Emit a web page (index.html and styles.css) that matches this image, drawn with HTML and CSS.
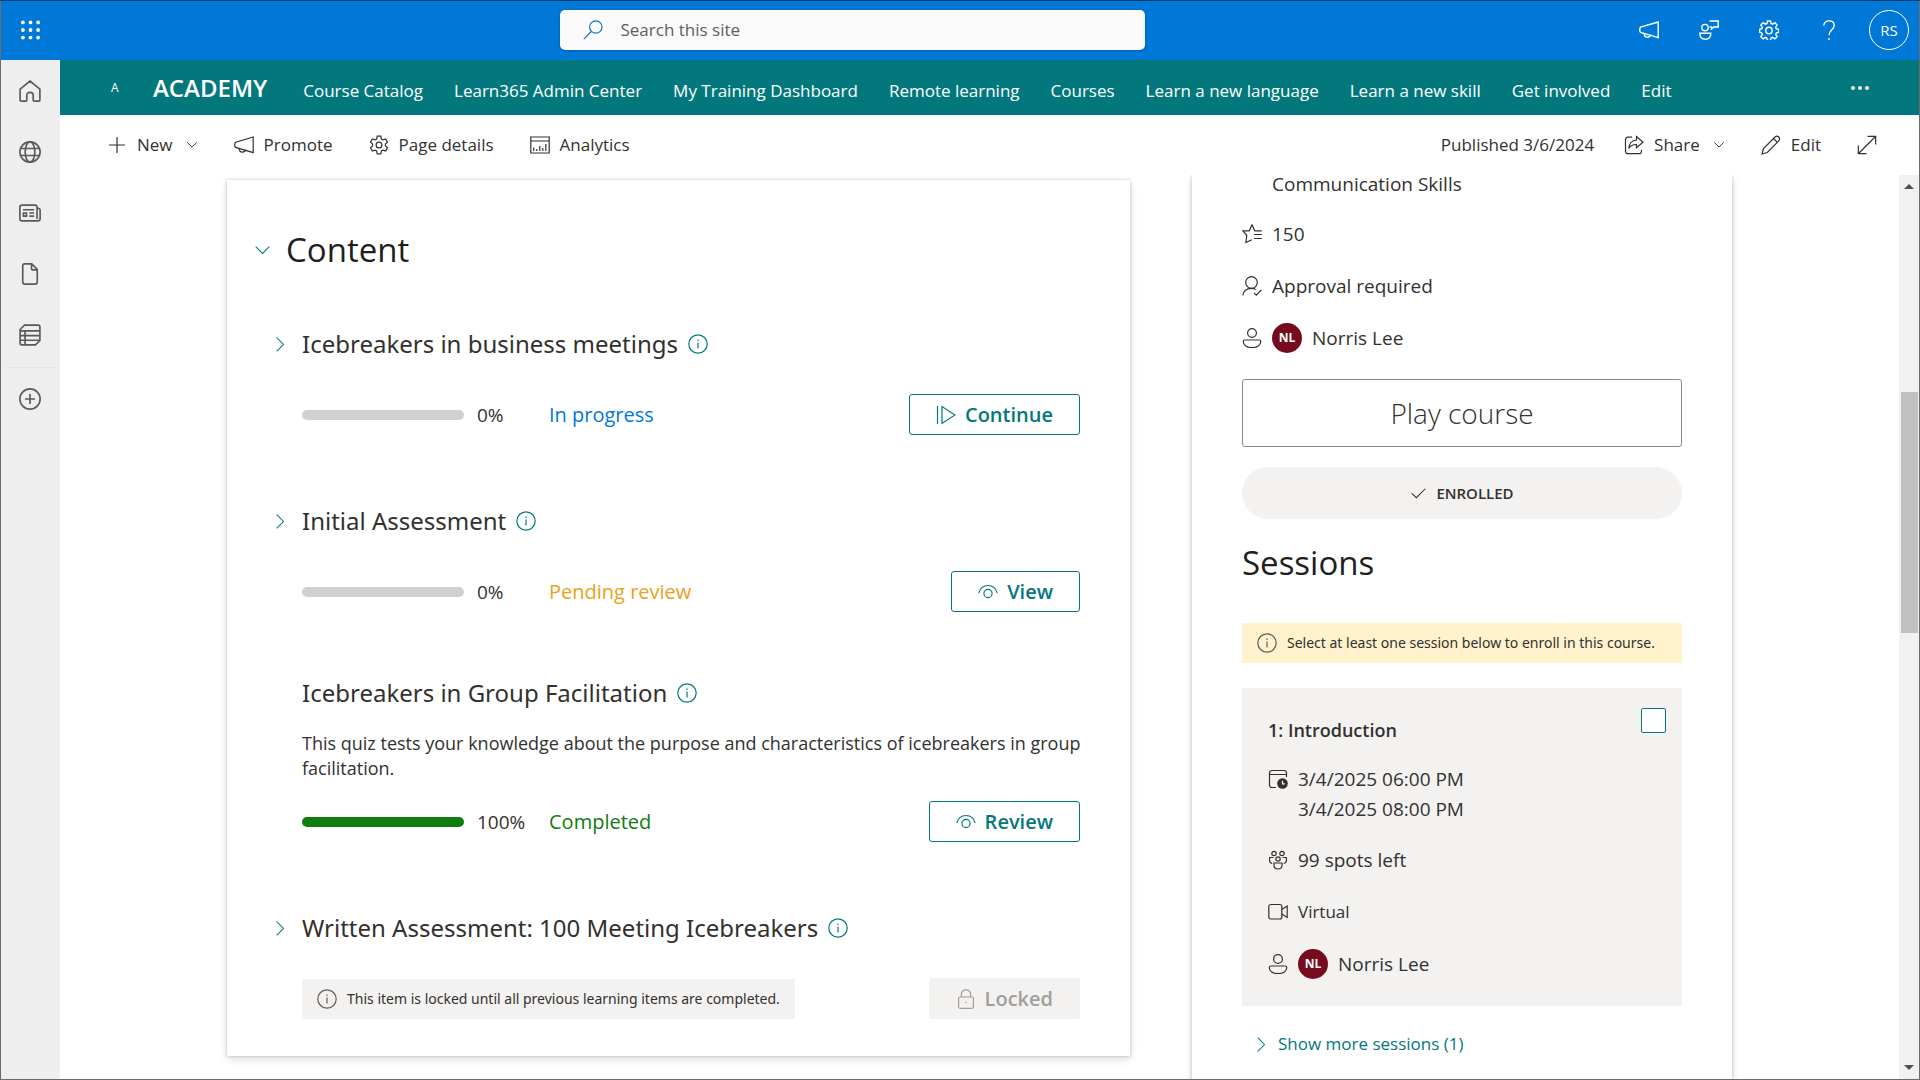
FILE: index.html
```html
<!DOCTYPE html>
<html lang="en">
  <head>
    <meta charset="UTF-8">
    <meta name="viewport" content="width=device-width, initial-scale=1">
    <title>Academy</title>
    <link rel="stylesheet" href="styles.css">
  </head>
  <body>

    <!-- icon sprite, 20x20 grid -->
    <svg class="sprite" aria-hidden="true">
      <symbol id="i-waffle" viewBox="0 0 20 20"><g fill="currentColor"><circle cx="2" cy="2" r="2"/><circle cx="10" cy="2" r="2"/><circle cx="18" cy="2" r="2"/><circle cx="2" cy="10" r="2"/><circle cx="10" cy="10" r="2"/><circle cx="18" cy="10" r="2"/><circle cx="2" cy="18" r="2"/><circle cx="10" cy="18" r="2"/><circle cx="18" cy="18" r="2"/></g></symbol>
      <symbol id="i-search" viewBox="0 0 20 20"><circle cx="12.8" cy="7" r="6.2"/><path d="M8.3 11.5L.8 19.2"/></symbol>
      <symbol id="i-megaphone" viewBox="0 0 20 20"><path d="M19.2 2v15.6L1.6 12.4.8 11.2V8.4L1.6 7.2z"/><path d="M5.2 13.6c0 2 1.3 3.6 3.2 3.6s3-1 3.4-2.6"/></symbol>
      <symbol id="i-feedback" viewBox="0 0 20 20"><path d="M10.5 1h8.7v6h-4.4l-2.3 2V7h-2"/><circle cx="6" cy="7.6" r="3.2"/><path d="M.8 13.2h11c0 4-2 6-5.5 6s-5.5-2-5.5-6z"/></symbol>
      <symbol id="i-gear" viewBox="0 0 20 20"><path d="M8.4 1h3.2l.5 2.5 1.6.7 2.2-1.5 2.3 2.3-1.5 2.2.7 1.6 2.4.5v3l-2.4.5-.7 1.6 1.5 2.2-2.3 2.3-2.2-1.5-1.6.7-.5 2.4H8.4l-.5-2.4-1.6-.7-2.2 1.5L1.8 16.6l1.5-2.2-.7-1.6-2-.5v-3l2-.5.7-1.6L1.8 5l2.3-2.3 2.2 1.5 1.6-.7z"/><circle cx="10" cy="10.5" r="3.2"/></symbol>
      <symbol id="i-settings" viewBox="0 0 20 20"><path d="M8.200 1.200h3.600l.6 2.800 1.600.9 2.700-.9 1.800 3.100-2.100 1.900v2l2.100 1.900-1.800 3.100-2.700-.9-1.600.9-.6 2.800H8.200L7.600 16 6 15.100l-2.700.9-1.800-3.100L3.600 11V9L1.500 7.100 3.300 4l2.700.9L7.600 4z"/><circle cx="10" cy="10" r="2.900"/></symbol>
      <symbol id="i-help" viewBox="0 0 20 20"><path d="M4.800 5.600C4.800 2.800 7 .9 10 .9s5.200 1.800 5.200 4.600c0 4-5.200 4.800-5.200 9.700"/><path d="M10 18v2"/></symbol>
      <symbol id="i-home" viewBox="0 0 20 20"><path d="M1 8.200L10 .9l9 7.300v10c0 .6-.4 1-1 1h-4.200c-.6 0-.9-.4-.9-1v-4.400c0-1.600-1.200-2.500-2.900-2.500s-2.900.9-2.900 2.500v4.400c0 .6-.3 1-.9 1H2c-.6 0-1-.4-1-1z"/></symbol>
      <symbol id="i-globe" viewBox="0 0 20 20"><circle cx="10" cy="10" r="9.200"/><ellipse cx="10" cy="10" rx="4.400" ry="9.200"/><path d="M1.400 6.800h17.200M1.400 13.200h17.200"/></symbol>
      <symbol id="i-news" viewBox="0 0 20 20"><path d="M16.400 15.500V4.800c0-1.200-.8-2-2-2H2.800c-1.200 0-2 .8-2 2v10.400c0 1.200.8 2 2 2h14.400c1.200 0 2-.8 2-2V7.400c0-1-.9-1.900-2.600-1.900M3.600 7h10.200M9.400 10h4.400M9.400 12.800h4.400M4 10h2.800v2.800H4z"/></symbol>
      <symbol id="i-file" viewBox="0 0 20 20"><path d="M5.200.8h6.400l5 5v11.400c0 1.200-.8 2-2 2H5.400c-1.200 0-2-.8-2-2V2.800c0-1.200.6-2 1.800-2z"/><path d="M11.400 1v4.200c0 .6.4 1 1 1h4"/></symbol>
      <symbol id="i-list" viewBox="0 0 20 20"><path d="M5 1h12.200c1 0 1.800.8 1.800 1.800V15l-4 4H2.800c-1 0-1.800-.8-1.800-1.800V5z"/><path d="M1.200 6.200H19M1 10.500h18M1 14.800h17.800M5.500 6.200V19"/></symbol>
      <symbol id="i-add-circle" viewBox="0 0 20 20"><circle cx="10" cy="10" r="9.200"/><path d="M10 5.500v9M5.500 10h9"/></symbol>
      <symbol id="i-plus" viewBox="0 0 20 20"><path d="M10 2v16M2 10h16"/></symbol>
      <symbol id="i-down" viewBox="0 0 20 20"><path d="M2 5.500l8 8 8-8"/></symbol>
      <symbol id="i-right" viewBox="0 0 20 20"><path d="M5.500 2l8 8-8 8"/></symbol>
      <symbol id="i-chart" viewBox="0 0 20 20"><path d="M.8 2h18.400v16H.8zM.8 6h18.400M3.800 16v-3.500M6.800 16v-2M9.800 16v-5M12.800 16v-3M15.800 16V9"/></symbol>
      <symbol id="i-share" viewBox="0 0 20 20"><path d="M8 2.200H4C2.500 2.200 1.500 3.200 1.500 4.700v11.500c0 1.500 1 2.500 2.500 2.500h11c1.500 0 2.500-1 2.500-2.500v-1.500"/><path d="M12.500 1.500l6.500 5.700-6.500 5.600V9.500c-3.500 0-6 1-7.700 4 .3-4.500 2.900-8 7.700-8.500z"/></symbol>
      <symbol id="i-pencil" viewBox="0 0 20 20"><path d="M1 19l1.500-5.500L14 2c1-1 2.800-1 3.800 0s1 2.800 0 3.800L6.300 17.500z"/><path d="M12.500 3.500l3.900 3.900"/></symbol>
      <symbol id="i-expand" viewBox="0 0 20 20"><path d="M1.500 18.500l17-17M10.500 1.300h8.200v8.200M1.300 10.500v8.200h8.200"/></symbol>
      <symbol id="i-info" viewBox="0 0 20 20"><circle cx="10" cy="10" r="9.200"/><path d="M10 8.500V14.500M10 5.500v1.500"/></symbol>
      <symbol id="i-play" viewBox="0 0 20 20"><path d="M1.500 1v18M6 1.500v17L19 10z"/></symbol>
      <symbol id="i-eye" viewBox="0 0 20 20"><path d="M.8 11C2 6.500 5.500 3.500 10 3.500s8 3 9.200 7.500"/><circle cx="10" cy="11.500" r="4.100"/></symbol>
      <symbol id="i-lock" viewBox="0 0 20 20"><rect x="2.600" y="8" width="14.800" height="11.300" rx="1.500"/><path d="M5.400 8V5.200C5.400 2.600 7.400.8 10 .8s4.600 1.800 4.600 4.400V8M10 12.700v1.600"/></symbol>
      <symbol id="i-star" viewBox="0 0 20 20"><path d="M19.800 6.800h-7L10 .8 7.200 6.800H.8l4 4.500L3.900 18.500l6-2.700M12 10.500h7.800M12 14.500h7.800"/></symbol>
      <symbol id="i-approve" viewBox="0 0 20 20"><circle cx="9.500" cy="6.500" r="5.800"/><path d="M.8 19.500c.5-4.600 4-7.200 8.700-7.200 1.600 0 3 .4 4.200 1.200M12 16.800l2.300 2.300L19.300 14"/></symbol>
      <symbol id="i-person" viewBox="0 0 20 20"><circle cx="10" cy="5" r="4.400"/><path d="M3 12h14c1 0 1.800.7 1.800 1.600 0 3.700-3.800 6-8.800 6s-8.800-2.300-8.800-6C1.200 12.700 2 12 3 12z"/></symbol>
      <symbol id="i-check" viewBox="0 0 20 20"><path d="M2 10.500l5.500 5L18 5"/></symbol>
      <symbol id="i-calendar" viewBox="0 0 20 20"><path d="M8 18.500H4c-1.500 0-2.500-1-2.500-2.500V4c0-1.500 1-2.500 2.500-2.500h12c1.500 0 2.500 1 2.500 2.500v4M1.500 5.500h17"/><circle cx="14.500" cy="14.500" r="5.300" fill="currentColor" stroke="none"/><path d="M14.500 11.800v3h2.300" stroke="#fff"/></symbol>
      <symbol id="i-people" viewBox="0 0 20 20"><circle cx="6" cy="3.500" r="2.200"/><circle cx="14" cy="3.500" r="2.200"/><circle cx="10" cy="9" r="2.200"/><path d="M6 13h8v2.500c0 2-1.600 3.500-4 3.500s-4-1.500-4-3.500zM5.500 7.500H1.800c0 0-1.600 5.500 2.400 6M14.500 7.500h3.700c0 0 1.600 5.500-2.400 6"/></symbol>
      <symbol id="i-video" viewBox="0 0 20 20"><rect x=".8" y="2.500" width="13" height="14.500" rx="2"/><path d="M13.800 7.500l5.400-3.500v11.500l-5.400-3.500"/></symbol>
    </svg>

    <header class="suite-bar">
      <button class="suite-btn" aria-label="App launcher"><svg class="icon"><use href="#i-waffle"/></svg></button>
      <form class="search" role="search">
        <label class="search-box">
          <svg class="icon"><use href="#i-search"/></svg>
          <input type="search" placeholder="Search this site" aria-label="Search this site">
        </label>
      </form>
      <button class="suite-btn" aria-label="Announcements"><svg class="icon"><use href="#i-megaphone"/></svg></button>
      <button class="suite-btn" aria-label="Feedback"><svg class="icon"><use href="#i-feedback"/></svg></button>
      <button class="suite-btn" aria-label="Settings"><svg class="icon"><use href="#i-gear"/></svg></button>
      <button class="suite-btn" aria-label="Help"><svg class="icon"><use href="#i-help"/></svg></button>
      <button class="suite-btn" aria-label="Account"><span class="me">RS</span></button>
    </header>

    <div class="shell">

      <nav class="app-bar" aria-label="App bar">
        <a href="#" aria-label="Home"><svg class="icon"><use href="#i-home"/></svg></a>
        <a href="#" aria-label="Sites"><svg class="icon"><use href="#i-globe"/></svg></a>
        <a href="#" aria-label="News"><svg class="icon"><use href="#i-news"/></svg></a>
        <a href="#" aria-label="Files"><svg class="icon"><use href="#i-file"/></svg></a>
        <a href="#" aria-label="Lists"><svg class="icon"><use href="#i-list"/></svg></a>
        <hr>
        <a href="#" aria-label="Create"><svg class="icon"><use href="#i-add-circle"/></svg></a>
      </nav>

      <div class="site">

        <div class="site-header">
          <span class="site-logo">A</span>
          <a class="site-title" href="#">ACADEMY</a>
          <nav class="site-nav">
            <a href="#">Course Catalog</a>
            <a href="#">Learn365 Admin Center</a>
            <a href="#">My Training Dashboard</a>
            <a href="#">Remote learning</a>
            <a href="#">Courses</a>
            <a href="#">Learn a new language</a>
            <a href="#">Learn a new skill</a>
            <a href="#">Get involved</a>
            <a href="#">Edit</a>
          </nav>
          <button class="more" aria-label="More"><i></i><i></i><i></i></button>
        </div>

        <div class="command-bar">
          <button class="cmd"><svg class="icon"><use href="#i-plus"/></svg>New<svg class="icon icon-caret"><use href="#i-down"/></svg></button>
          <button class="cmd"><svg class="icon"><use href="#i-megaphone"/></svg>Promote</button>
          <button class="cmd"><svg class="icon"><use href="#i-settings"/></svg>Page details</button>
          <button class="cmd"><svg class="icon"><use href="#i-chart"/></svg>Analytics</button>
          <span class="published">Published 3/6/2024</span>
          <button class="cmd"><svg class="icon"><use href="#i-share"/></svg>Share<svg class="icon icon-caret"><use href="#i-down"/></svg></button>
          <button class="cmd"><svg class="icon"><use href="#i-pencil"/></svg>Edit</button>
          <button class="cmd" aria-label="Expand"><svg class="icon"><use href="#i-expand"/></svg></button>
        </div>

        <div class="scroll-area">
          <main class="page">

            <section class="card content">
              <h2 class="content-title"><button class="toggle" aria-label="Collapse content"><svg class="icon icon-small"><use href="#i-down"/></svg></button>Content</h2>

              <article class="item">
                <h3 class="item-title item-title-toggle"><button class="toggle" aria-label="Expand"><svg class="icon icon-small"><use href="#i-right"/></svg></button>Icebreakers in business meetings <svg class="icon"><use href="#i-info"/></svg></h3>
                <div class="item-row">
                  <progress value="0" max="100" aria-label="Progress"></progress>
                  <span class="percent">0%</span>
                  <span class="status status-progress">In progress</span>
                  <button class="btn"><svg class="icon"><use href="#i-play"/></svg>Continue</button>
                </div>
              </article>

              <article class="item">
                <h3 class="item-title item-title-toggle"><button class="toggle" aria-label="Expand"><svg class="icon icon-small"><use href="#i-right"/></svg></button>Initial Assessment <svg class="icon"><use href="#i-info"/></svg></h3>
                <div class="item-row">
                  <progress value="0" max="100" aria-label="Progress"></progress>
                  <span class="percent">0%</span>
                  <span class="status status-pending">Pending review</span>
                  <button class="btn"><svg class="icon"><use href="#i-eye"/></svg>View</button>
                </div>
              </article>

              <article class="item">
                <h3 class="item-title">Icebreakers in Group Facilitation <svg class="icon"><use href="#i-info"/></svg></h3>
                <p class="item-text">This quiz tests your knowledge about the purpose and characteristics of icebreakers in group facilitation.</p>
                <div class="item-row item-row-tight">
                  <progress value="100" max="100" aria-label="Progress"></progress>
                  <span class="percent">100%</span>
                  <span class="status status-done">Completed</span>
                  <button class="btn"><svg class="icon"><use href="#i-eye"/></svg>Review</button>
                </div>
              </article>

              <article class="item">
                <h3 class="item-title item-title-toggle"><button class="toggle" aria-label="Expand"><svg class="icon icon-small"><use href="#i-right"/></svg></button>Written Assessment: 100 Meeting Icebreakers <svg class="icon"><use href="#i-info"/></svg></h3>
                <div class="item-row">
                  <div class="notice"><svg class="icon"><use href="#i-info"/></svg>This item is locked until all previous learning items are completed.</div>
                  <button class="btn" disabled><svg class="icon"><use href="#i-lock"/></svg>Locked</button>
                </div>
              </article>
            </section>

            <aside class="card details">
              <ul class="facts">
                <li class="fact-indent">Communication Skills</li>
                <li><svg class="icon"><use href="#i-star"/></svg>150</li>
                <li><svg class="icon"><use href="#i-approve"/></svg>Approval required</li>
                <li><svg class="icon"><use href="#i-person"/></svg><span class="avatar">NL</span>Norris Lee</li>
              </ul>
              <button class="btn-play">Play course</button>
              <div class="enrolled"><svg class="icon"><use href="#i-check"/></svg>ENROLLED</div>

              <h2 class="sessions-title">Sessions</h2>
              <div class="notice notice-warn"><svg class="icon"><use href="#i-info"/></svg>Select at least one session below to enroll in this course.</div>

              <div class="session">
                <div class="session-head">
                  <label for="session-1">1: Introduction</label>
                  <input type="checkbox" id="session-1">
                </div>
                <ul class="facts facts-session">
                  <li class="fact-dates"><svg class="icon"><use href="#i-calendar"/></svg><span>3/4/2025 06:00 PM<br>3/4/2025 08:00 PM</span></li>
                  <li><svg class="icon"><use href="#i-people"/></svg>99 spots left</li>
                  <li class="fact-place"><svg class="icon"><use href="#i-video"/></svg>Virtual</li>
                  <li><svg class="icon"><use href="#i-person"/></svg><span class="avatar">NL</span>Norris Lee</li>
                </ul>
              </div>

              <a class="show-more" href="#"><svg class="icon icon-small"><use href="#i-right"/></svg>Show more sessions (1)</a>
            </aside>

          </main>
          <div class="scrollbar" aria-hidden="true">
            <span class="arrow arrow-up"></span>
            <span class="thumb"></span>
            <span class="arrow arrow-down"></span>
          </div>
        </div>

      </div>
    </div>

  </body>
</html>
```

FILE: styles.css
```css
* { box-sizing: border-box }
body {
  display: flex;
  flex-direction: column;
  height: 100vh;
  margin: 0;
  overflow: hidden;
  border: 1px solid #6b6b6b;
  border-top-color: #003c6b;
  background: #fff;
  color: #323130;
  font: 17px/24px "Open Sans", "Noto Sans", sans-serif;
}
button, input { font: inherit; color: inherit }
button { padding: 0; border: 0; background: none }
a { color: inherit; text-decoration: none }
h2, h3, p, ul { margin: 0; padding: 0; font-weight: 400; list-style: none }

.sprite { display: none }
.icon { flex: none; width: 20px; height: 20px; fill: none; stroke: currentColor; stroke-width: 1.2 }
.icon-small { width: 17px; height: 17px }
.icon-caret { width: 12px; height: 12px; margin-left: 3px; stroke-width: 1.6 }

/* suite bar */

.suite-bar { display: flex; flex: none; height: 59px; padding-bottom: 1px; background: #0078d7; color: #fff }
.suite-btn { display: flex; align-items: center; justify-content: center; width: 60px }
.suite-btn:first-child { width: 58px; margin-right: 26px }
.suite-btn .icon { stroke-width: 1.4 }
.suite-btn:first-child .icon { width: 19px; stroke: none }
.me { width: 40px; border: 1px solid #fff; border-radius: 50%; font-size: 15px; line-height: 38px }
.search { display: flex; flex: 1; align-items: center; justify-content: center }
.search-box { display: flex; align-items: center; gap: 16px; width: 585px; height: 40px; padding: 0 23px; border-radius: 5px; background: #fafafa; color: #1a73c7; box-shadow: 0 1px 3px rgba(0,0,0,.25) }
.search-box input { flex: 1; border: 0; outline: 0; background: none; color: #605e5c }
.search-box input::placeholder { color: #605e5c }

/* left app bar */

.shell { display: flex; flex: 1; min-height: 0 }
.app-bar { flex: none; width: 59px; padding-right: 2px; background: #eee; color: #5a5a5a }
.app-bar a { display: flex; align-items: center; justify-content: center; height: 61px }
.app-bar .icon { width: 22px; height: 22px; stroke-width: 1.5 }
.app-bar hr { margin: 2px 3px 0 5px; border: 0; border-top: 1px solid #e2e4e6 }

/* site header */

.site { display: flex; flex: 1; flex-direction: column; min-width: 0 }
.site-header { display: flex; flex: none; align-items: center; height: 55px; padding: 0 50px 0 51px; background: #03787c; color: #fff }
.site-logo { width: 10px; font-size: 12px }
.site-title { margin: 0 36px 0 32px; font-size: 24px; font-weight: 600 }
.site-nav { display: flex; flex: 1; gap: 31px; padding-top: 6px; white-space: nowrap }
.more { display: flex; gap: 3px }
.more i { width: 4px; height: 4px; border-radius: 50%; background: #fff }

/* command bar */

.command-bar { display: flex; flex: none; align-items: center; gap: 36px; height: 60px; padding: 0 42px 0 47px }
.cmd { display: flex; align-items: center; gap: 10px }
.published { margin-left: auto; margin-right: -6px }

/* page */

.scroll-area { display: flex; flex: 1; min-height: 0 }
.page { display: flex; flex: 1; align-items: flex-start; justify-content: center; gap: 62px; padding: 0 167px }
.card { background: #fff; box-shadow: 0 0 3px rgba(0,0,0,.2), 0 3px 8px rgba(0,0,0,.14) }
.content { flex: 1; margin-top: 5px; padding: 48px 50px 37px 75px }
/* runs out of view above and below, so only the side shadows show */
.details { flex: none; width: 540px; padding: 0 50px 60px; clip-path: inset(0 -12px) }

.content-title, .sessions-title { color: #201f1e; font-size: 33px; line-height: 44px }
.content-title { display: flex; align-items: center; margin: 0 0 52px -48px }
.content-title .toggle { margin-right: 15px }
.toggle { display: flex; color: #03787c }

.item + .item { margin-top: 66px }
.item-title { display: flex; align-items: center; gap: 10px; font-family: "Noto Sans", sans-serif; font-size: 24px; line-height: 30px }
.item-title-toggle { height: 40px; margin-left: -30px }
.item-title-toggle .toggle { width: 20px }
.item-title > .icon { color: #03787c }
.item-text { margin: 23px -8px 0 0; font-size: 18px; line-height: 25px }
.item-row { display: flex; align-items: center; margin-top: 30px }
.item-row-tight { margin-top: 20px }

progress { width: 162px; height: 10px; border: 0; border-radius: 5px; background: #d2d0ce; overflow: hidden; appearance: none }
progress::-webkit-progress-bar { background: #d2d0ce }
progress::-webkit-progress-value { background: #107c10 }
.percent { width: 72px; margin-left: 13px; font-size: 19px }
.status { font-size: 20px }
.status-progress { color: #0078d4 }
.status-pending { color: #eaa21a }
.status-done { color: #107c10 }

.btn { display: flex; align-items: center; gap: 9px; height: 41px; margin-left: auto; padding: 0 26px; border: 1px solid #03787c; border-radius: 3px; color: #03787c; font-size: 20px; font-weight: 600 }
.btn:disabled { border-color: #f3f2f1; background: #f3f2f1; color: #a19f9d }

.notice { display: flex; align-items: center; gap: 10px; height: 40px; padding: 0 15px; background: #f3f2f1; font-family: "Noto Sans", sans-serif; font-size: 14px }
.notice .icon { color: #605e5c }
.notice-warn { background: #fff2cc }

/* course details */

.facts { font-size: 19px }
.facts li { display: flex; align-items: center; gap: 10px; height: 52px }
.facts li.fact-indent { height: 18px; margin-bottom: 15px; padding-left: 30px; line-height: 18px }
.avatar { width: 30px; border-radius: 50%; background: #750b1c; color: #fff; font-size: 12px; font-weight: 700; line-height: 30px; text-align: center }

.btn-play { width: 100%; height: 68px; margin-top: 15px; border: 1px solid #8a8886; border-radius: 3px; font-size: 28px; font-weight: 300 }
.enrolled { display: flex; align-items: center; justify-content: center; gap: 9px; height: 52px; margin-top: 20px; border-radius: 26px; background: #f3f2f1; font-size: 15px; font-weight: 600 }
.enrolled .icon { width: 17px }
.sessions-title { margin: 22px 0 38px }

.session { height: 318px; margin-top: 25px; padding: 20px 16px 0 26px; background: #f3f2f1 }
.session-head { display: flex; justify-content: space-between; font-size: 18px; font-weight: 600 }
.session-head label { padding-top: 10px }
.session-head input { width: 25px; height: 25px; margin: 0; border: 1px solid #03787c; border-radius: 2px; background: #fff; appearance: none }
.facts-session { margin-top: 22px }
.facts li.fact-dates { align-items: flex-start; height: 70px; line-height: 30px }
.fact-dates .icon { margin-top: 5px }
.facts .fact-place { font-size: 17px }
.show-more { display: flex; align-items: center; gap: 8px; margin-top: 26px; padding-left: 11px; color: #03787c }

/* scrollbar */

.scrollbar { position: relative; flex: none; width: 20px; background: #f1f1f1 }
.thumb { position: absolute; top: 24%; left: 2px; width: 17px; height: 241px; background: #c1c1c1 }
.arrow { position: absolute; left: 5px; border: 5px solid transparent }
.arrow-up { top: 4px; border-bottom-color: #505050 }
.arrow-down { bottom: 4px; border-top-color: #505050 }
```
